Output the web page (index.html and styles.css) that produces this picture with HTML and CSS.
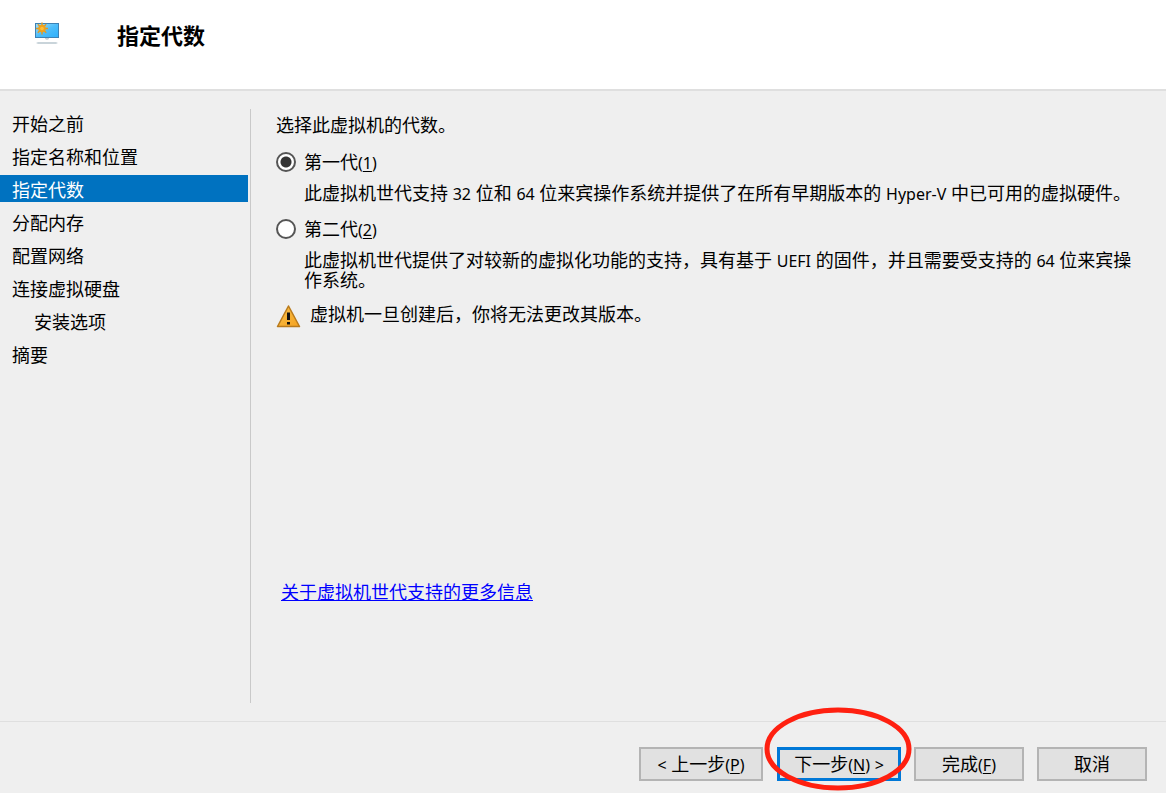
FILE: index.html
```html
<!DOCTYPE html>
<html lang="zh-CN">

<head>
    <meta charset="UTF-8">
    <meta name="viewport" content="width=device-width, initial-scale=1.0">
    <title>新建虚拟机向导</title>
    <link rel="stylesheet" href="styles.css">
</head>

<body>
    <header class="header">
        <svg class="header-icon" viewBox="0 0 26 24" aria-hidden="true">
            <defs>
                <linearGradient id="screen" x1="0" y1="0" x2="1" y2="1">
                    <stop offset="0" stop-color="#a5def7" />
                    <stop offset="0.5" stop-color="#4dbdfa" />
                    <stop offset="1" stop-color="#2fb0fb" />
                </linearGradient>
            </defs>
            <rect x="1" y="2" width="24" height="15" fill="#3d82b5" />
            <rect x="2" y="3" width="22" height="13" fill="url(#screen)" />
            <path d="M11 17h4v1l-2 1-2-1z" fill="#c3ced6" />
            <path d="M4 21h18l2 1-2 1H4l-2-1z" fill="#c9d4da" />
            <path d="M8 1.500v12M2 7.500h12M3.800 3.300l8.400 8.400M12.200 3.300l-8.400 8.400" stroke="#dc9a2b" stroke-width="1.500" />
            <circle cx="8" cy="7.500" r="3.800" fill="#f0a21c" />
            <circle cx="8" cy="7.500" r="1.800" fill="#ffbe3a" />
        </svg>
        <h1>指定代数</h1>
    </header>

    <div class="container">
        <nav class="steps">
            <a href="#">开始之前</a>
            <a href="#">指定名称和位置</a>
            <a href="#" class="active" aria-current="step">指定代数</a>
            <a href="#">分配内存</a>
            <a href="#">配置网络</a>
            <a href="#">连接虚拟硬盘</a>
            <a href="#" class="sub-step">安装选项</a>
            <a href="#">摘要</a>
        </nav>

        <main class="content">
            <p class="intro" id="intro">选择此虚拟机的代数。</p>

            <div class="options" role="radiogroup" aria-labelledby="intro">
                <div class="option">
                    <input type="radio" name="generation" id="gen1" checked>
                    <label for="gen1">第一代<span class="latin">(<u>1</u>)</span></label>
                    <p>此虚拟机世代支持 <span class="latin">32</span> 位和 <span class="latin">64</span> 位来宾操作系统并提供了在所有早期版本的 <span class="latin">Hyper-V</span> 中已可用的虚拟硬件。</p>
                </div>
                <div class="option">
                    <input type="radio" name="generation" id="gen2">
                    <label for="gen2">第二代<span class="latin">(<u>2</u>)</span></label>
                    <p>此虚拟机世代提供了对较新的虚拟化功能的支持，具有基于 <span class="latin">UEFI</span> 的固件，并且需要受支持的 <span class="latin">64</span> 位来宾操作系统。</p>
                </div>
            </div>

            <div class="warning">
                <svg class="warning-icon" viewBox="0 0 26 24" aria-hidden="true">
                    <defs>
                        <linearGradient id="amber" x1="0" y1="0" x2="1" y2="1">
                            <stop offset="0" stop-color="#f7c04d" />
                            <stop offset="1" stop-color="#f5a21f" />
                        </linearGradient>
                    </defs>
                    <path d="M12.500 2L23.500 22.500H1.500z" fill="url(#amber)" stroke="#b97a1c" stroke-width="1.500" stroke-linejoin="round" />
                    <path d="M11 8.500h3v7.500h-3zM11 18h3v2.500h-3z" fill="#111" />
                </svg>
                <p>虚拟机一旦创建后，你将无法更改其版本。</p>
            </div>

            <a class="more-link" href="#">关于虚拟机世代支持的更多信息</a>
        </main>
    </div>

    <footer class="footer">
        <div class="step-buttons">
            <button type="button" class="wide"><span class="latin">&lt;</span> 上一步<span class="latin">(<u>P</u>)</span></button>
            <div class="next">
                <button type="button" class="wide primary">下一步<span class="latin">(<u>N</u>)</span> <span class="latin">&gt;</span></button>
                <svg class="marker" viewBox="0 0 148 84" aria-hidden="true">
                    <ellipse cx="74" cy="42" rx="71" ry="39" fill="none" stroke="#ff2010" stroke-width="5" />
                </svg>
            </div>
        </div>
        <button type="button">完成<span class="latin">(<u>F</u>)</span></button>
        <button type="button">取消</button>
    </footer>
</body>

</html>
```
FILE: styles.css
```css
:root {
    --text-color: #000;
    --bg-color: #efefef;
    --line-color: #dfdfdf;
    --accent-color: #0078d7;
    --selected-color: #0072c0;
}

* {
    box-sizing: border-box;
}

body {
    display: flex;
    flex-direction: column;
    min-height: 100vh;
    margin: 0;
    background: var(--bg-color);
    color: var(--text-color);
    font-family: 'Noto Sans', 'Noto Sans CJK SC', sans-serif;
    font-size: 18px;
    line-height: 20px;
}

p,
h1 {
    margin: 0;
}

.latin {
    font-size: 16px;
    line-height: 16px;
}

u {
    text-underline-offset: 2px;
}

.header {
    display: flex;
    align-items: flex-start;
    gap: 57px;
    height: 91px;
    padding: 21px 34px;
    background: #fff;
    border-bottom: 2px solid var(--line-color);
}

.header-icon {
    width: 26px;
    height: 24px;
}

.header h1 {
    font-size: 22px;
    line-height: 28px;
    font-weight: 700;
}

.container {
    display: flex;
    flex: 1;
    padding: 18px 0;
}

/* 左侧步骤列表 */
.steps {
    display: flex;
    flex-direction: column;
    gap: 6px;
    width: 251px;
    padding-right: 2px;
    border-right: 1px solid #c9c9c9;
}

.steps a {
    padding: 3px 12px 0;
    line-height: 24px;
    color: var(--text-color);
    text-decoration: none;
}

.steps .active {
    background: var(--selected-color);
    color: #fff;
}

.steps .sub-step {
    padding-left: 34px;
}

.content {
    display: flex;
    flex: 1;
    flex-direction: column;
    padding: 6px 24px 101px 25px;
}

.options {
    display: grid;
    gap: 16px;
    margin: 17px 0 14px;
}

.option {
    display: grid;
    grid-template-columns: 20px 1fr;
    gap: 11px 8px;
}

.option p {
    grid-column: 2;
}

.option input {
    appearance: none;
    width: 20px;
    height: 20px;
    margin: 0;
    border: 2px solid #555;
    border-radius: 50%;
    background: #fff;
}

.option input:checked {
    background: radial-gradient(circle, #333 5px, #fff 6px);
}

.warning {
    display: flex;
    gap: 8px;
}

.warning-icon {
    width: 26px;
    height: 24px;
}

.more-link {
    align-self: flex-start;
    margin-top: auto;
    margin-left: 5px;
    color: #00f;
    text-underline-offset: 1px;
}

.footer {
    display: flex;
    justify-content: flex-end;
    gap: 13px;
    padding: 25px 19px 12px;
    border-top: 1px solid var(--line-color);
}

.step-buttons {
    display: flex;
    gap: 14px;
}

button {
    width: 110px;
    height: 34px;
    padding: 0;
    border: 2px solid #b4b4b4;
    background: #e1e1e1;
    color: var(--text-color);
    font: inherit;
}

button.wide {
    width: 124px;
}

button.primary {
    border: 3px solid var(--accent-color);
}

.next {
    position: relative;
}

/* “下一步”按钮上的红圈标注 */
.marker {
    position: absolute;
    top: -40px;
    left: -13px;
    width: 148px;
    height: 84px;
    pointer-events: none;
}
```
